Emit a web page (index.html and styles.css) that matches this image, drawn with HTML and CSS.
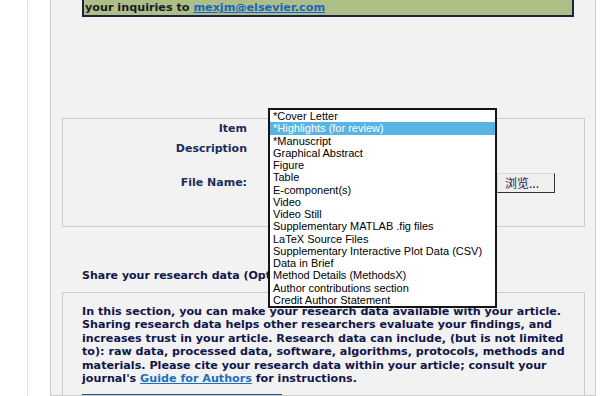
FILE: index.html
```html
<!DOCTYPE html>
<html>
<head>
<meta charset="utf-8">
<link rel="stylesheet" href="styles.css">
</head>
<body>
<div class="page">
  <div class="rail">
    <div class="panel">
      <div class="notice">your inquiries to <a href="#" class="notice-link">mexjm@elsevier.com</a></div>
      <div class="formbox">
        <div class="lbl">Item</div>
        <div class="field"><div class="select-box"></div></div>
        <div class="lbl">Description</div>
        <div class="field"><div class="text-box"></div></div>
        <div class="lbl">File Name:</div>
        <div class="field file-field"><div class="file-text"></div><div class="browse">浏览...</div></div>
      </div>
      <div class="share">Share your research data (Optional)</div>
      <div class="databox">
        <p class="intro">In this section, you can make your research data available with your article.<br>Sharing research data helps other researchers evaluate your findings, and<br>increases trust in your article. Research data can include, (but is not limited<br>to): raw data, processed data, software, algorithms, protocols, methods and<br>materials. Please cite your research data within your article; consult your<br>journal's <a href="#" class="guide">Guide for Authors</a> for instructions.</p>
        <div class="action-bar"></div>
      </div>
    </div>
  </div>
</div>
<ul class="popup">
  <li>*Cover Letter</li>
  <li class="sel">*Highlights (for review)</li>
  <li>*Manuscript</li>
  <li>Graphical Abstract</li>
  <li>Figure</li>
  <li>Table</li>
  <li>E-component(s)</li>
  <li>Video</li>
  <li>Video Still</li>
  <li>Supplementary MATLAB .fig files</li>
  <li>LaTeX Source Files</li>
  <li>Supplementary Interactive Plot Data (CSV)</li>
  <li>Data in Brief</li>
  <li>Method Details (MethodsX)</li>
  <li>Author contributions section</li>
  <li>Credit Author Statement</li>
</ul>
</body>
</html>
```
FILE: styles.css
```css
html, body {
  margin: 0;
  padding: 0;
  background: #ffffff;
  height: 396px;
  overflow: hidden;
}
.page {
  padding-left: 27px;
  font-family: "DejaVu Sans", Verdana, sans-serif;
}
.rail {
  border-left: 1px dotted #d0d0d0;
  padding-left: 22px;
  height: 396px;
}
.panel {
  box-sizing: border-box;
  width: 546px;
  height: 396px;
  background: #f2f2f2;
  border: 1px solid #cccccc;
  border-top: none;
  overflow: hidden;
}
.notice {
  box-sizing: border-box;
  margin-left: 31px;
  width: 492px;
  background: #adbf86;
  border: 2px solid #1e2140;
  border-top: none;
  padding: 0 1px;
  font-size: 11.2px;
  font-weight: bold;
  line-height: 15px;
  color: #1a1a28;
}
.notice-link {
  color: #1565c8;
  text-decoration: underline;
}
.formbox {
  box-sizing: border-box;
  margin: 101px 0 0 11px;
  width: 523px;
  height: 109px;
  border: 1px solid #cccccc;
  display: grid;
  grid-template-columns: 184px 1fr;
  grid-template-rows: 20px 34px 20px;
  column-gap: 21px;
  align-content: start;
}
.lbl {
  text-align: right;
  font-size: 11px;
  font-weight: bold;
  line-height: 20px;
  color: #1b2d5e;
}
.field {
  display: flex;
  align-items: flex-start;
}
.select-box, .text-box {
  width: 229px;
  height: 18px;
}
.file-text {
  width: 229px;
  height: 19px;
}
.browse {
  box-sizing: border-box;
  width: 58px;
  height: 20px;
  background: #efefef;
  border: 1px solid #d8d8d8;
  border-right-color: #333333;
  border-bottom-color: #333333;
  font-family: "Noto Sans CJK SC", sans-serif;
  font-size: 12px;
  line-height: 17px;
  padding-left: 7px;
  color: #1a1a40;
}
.share {
  margin: 41px 0 0 31px;
  font-size: 11px;
  font-weight: bold;
  line-height: 15px;
  color: #10164a;
}
.databox {
  box-sizing: border-box;
  margin: 9px 0 0 11px;
  width: 523px;
  height: 200px;
  border: 1px solid #cccccc;
  padding: 12px 0 0 19px;
}
.intro {
  margin: 0;
  font-size: 11.15px;
  font-weight: bold;
  line-height: 13.4px;
  color: #10164a;
  white-space: nowrap;
}
.guide {
  color: #1f6fbf;
  text-decoration: underline;
}
.action-bar {
  margin-top: 9px;
  width: 200px;
  height: 20px;
  background: #1a5a8a;
}
.popup {
  position: absolute;
  left: 268px;
  top: 108px;
  box-sizing: border-box;
  width: 229px;
  margin: 0;
  padding: 0;
  list-style: none;
  background: #ffffff;
  border: 2px solid #151515;
  font-family: "Liberation Sans", Arial, sans-serif;
  font-size: 11px;
  line-height: 12.25px;
  color: #000000;
}
.popup li {
  padding-left: 3px;
  white-space: nowrap;
}
.popup li.sel {
  background: #58b4e2;
  color: #ffffff;
}
```
